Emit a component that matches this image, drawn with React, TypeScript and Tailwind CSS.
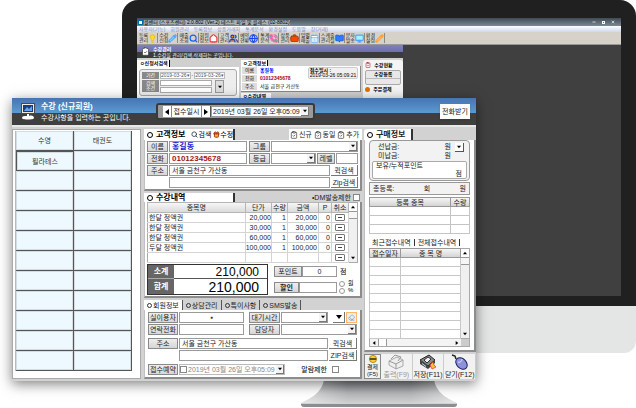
import React from "react";
import {
  BriefcaseBusiness,
  CalendarDays,
  ClipboardCheck,
  Eraser,
  Gift,
  Globe,
  Home,
  Lightbulb,
  Minus,
  MonitorDown,
  Pencil,
  PhoneCall,
  Search,
  Users,
  BookOpen,
  X,
} from "lucide-react";

const labelLook =
  "flex shrink-0 items-center justify-center whitespace-nowrap border border-[#8a8a8a] bg-gradient-to-b from-[#eeeeee] to-[#d6d6d6] text-[7px] leading-none text-[#222]";
const fieldLook =
  "min-w-0 border border-[#9a9a9a] bg-white px-[2px] leading-[9px] outline-none";

function Label({ id, children, className = "" }: { id: string; children: React.ReactNode; className?: string }) {
  return (
    <label htmlFor={id} className={`${labelLook} ${className}`}>
      {children}
    </label>
  );
}

function Field({ id, value = "", className = "", name, text = "text-[7px] text-[#222]" }: { id: string; value?: string; className?: string; name?: string; text?: string }) {
  return <input id={id} aria-label={name} defaultValue={value} className={`${fieldLook} ${text} ${className}`} />;
}

function Arrow({ dir = "down", className = "size-[4px]" }: { dir?: "down" | "up" | "left" | "right"; className?: string }) {
  const d = { down: "M0 1h6L3 5z", up: "M0 5h6L3 1z", left: "M5 0v6L1 3z", right: "M1 0v6l4-3z" }[dir];
  return (
    <svg viewBox="0 0 6 6" className={`shrink-0 fill-black ${className}`} aria-hidden="true">
      <path d={d} />
    </svg>
  );
}

function Select({ id, value = "", className = "", text = "text-[#222]", name }: { id: string; value?: string; className?: string; text?: string; name?: string }) {
  return (
    <span className={`flex min-w-0 items-stretch border border-[#9a9a9a] bg-white ${className}`}>
      <select id={id} aria-label={name} className={`min-w-0 flex-1 appearance-none bg-white pl-px text-[7px] leading-none outline-none ${text}`}>
        <option>{value}</option>
      </select>
      <span className="flex w-[8px] shrink-0 items-center justify-center border-r border-b border-[#777] bg-[#f4f4f4]">
        <Arrow />
      </span>
    </span>
  );
}

function Tick({ id, name }: { id: string; name?: string }) {
  return <input id={id} aria-label={name} type="checkbox" className="size-[7px] shrink-0 appearance-none border border-[#888] bg-white" />;
}

function SmallButton({ children, className = "" }: { children: React.ReactNode; className?: string }) {
  return (
    <button className={`flex shrink-0 items-center justify-center whitespace-nowrap border-r border-b border-[#777] bg-white text-[7px] leading-none text-[#222] ${className}`}>
      {children}
    </button>
  );
}

function Ring() {
  return <span className="size-[6px] shrink-0 rounded-full border border-black bg-white" />;
}

const panel = "border-r-2 border-b-2 border-l border-[#8c8c8c] border-l-[#c0c0c0] bg-white";

/* ---------- background program on the monitor ---------- */

const tools = [
  { a: "등록", b: "관리", icon: <Lightbulb className="size-[9px] fill-yellow-300 text-yellow-500" /> },
  { a: "수강", b: "신청", icon: <Pencil className="size-[9px] fill-sky-300 text-blue-500" /> },
  { a: "매출", b: "조회", icon: <Search className="size-[9px] stroke-[3] text-blue-600" /> },
  { a: "회원", b: "정보", icon: <Home className="size-[9px] fill-white stroke-[3] text-red-500" /> },
  { a: "고객", b: "관리", icon: <Users className="size-[9px] fill-orange-400 stroke-[3] text-blue-800" /> },
  { a: "예약", b: "현황", icon: <Globe className="size-[9px] fill-sky-200 stroke-[3] text-blue-700" /> },
  { a: "통계", b: "분석", icon: <PhoneCall className="size-[9px] fill-green-400 stroke-[3] text-pink-400" /> },
  { a: "상품", b: "관리", icon: <BriefcaseBusiness className="size-[9px] fill-orange-600 text-orange-800" /> },
  { a: "일별", b: "매출", icon: <CalendarDays className="size-[9px] fill-white text-blue-400" /> },
  { a: "스케줄", b: "관리실", icon: <BookOpen className="size-[9px] fill-blue-500 text-blue-700" /> },
  { a: "문자", b: "발송", icon: <MonitorDown className="size-[9px] fill-cyan-200 stroke-[3] text-blue-400" /> },
  { a: "환경", b: "설정", icon: <Pencil className="size-[9px] fill-orange-300 text-orange-400" /> },
];

function BackProgram() {
  return (
    <div className="text-[5px] leading-none">
      <div className="flex h-[8px] items-center gap-px bg-gradient-to-b from-[#3f4b55] to-[#7d8a94] pl-px text-black">
        <span className="size-[5px] shrink-0 border border-sky-700 bg-white" />
        <span className="whitespace-nowrap bg-[#a8b0b6]">콜센터 (스포츠센터) 2.0.802 (Ver.2) 테스트 파일 및 클래스 (02-8802)</span>
        <span className="ml-auto flex items-center gap-[6px] pr-[6px] text-white">
          <Minus className="size-[4px] stroke-[4]" />
          <span className="size-[3px] border border-white" />
          <X className="size-[4px] stroke-[4]" />
        </span>
      </div>
      <div className="flex h-[6px] items-center gap-[5px] bg-gradient-to-b from-white to-[#cfd8ee] pl-[2px] whitespace-nowrap text-[#8890ac]">
        <span>사용자(기능)</span><span>회원관리</span><span>등록정보</span><span>상품거래처</span><span>통계분석</span><span>환경설정</span><span>도움말</span><span>창(거래)</span>
      </div>
      <div className="flex h-[13px] items-stretch gap-px border-b border-[#999] bg-[#d6d2ca] py-px pl-[2px]">
        {tools.map((t) => (
          <button key={t.a} className="flex items-center border-r border-[#8d8a84] leading-[5px] whitespace-nowrap text-[#222]">
            <span>{t.a}<br />{t.b}</span>
            {t.icon}
          </button>
        ))}
      </div>
      <div className="mr-[45%] bg-[#d0d0d0]">
        <div className="flex h-[13px] items-center gap-[3px] bg-[linear-gradient(#8080bc_0,#6f6fae_7px,#3c3c3c_7px)] pl-[4px]">
          <ClipboardCheck className="size-[9px] shrink-0 fill-white text-[#444]" />
          <div className="leading-[6px] text-white">
            <b className="block">수강관리</b>
            <span className="block whitespace-nowrap">1.수강을 관리/검색,삭제하는 곳입니다.</span>
          </div>
        </div>
        <div className="flex gap-[2px] pt-[2px] text-[5px]">
          <div className="w-[102px] shrink-0">
            <div className="flex h-[7px] w-[33px] items-center border-r border-black bg-white pl-[3px] font-bold whitespace-nowrap">
              ㅇ신청서검색
            </div>
            <div className="bg-white p-[2px]">
              <div className="flex gap-px rounded-[3px] border border-[#aaa] bg-[#eee] p-[2px]">
                <div className="flex w-[17px] flex-col gap-px text-center text-white">
                  <span className="bg-[#888] py-px">기간</span>
                  <span className="bg-[#888] py-px">검색<br />조건</span>
                </div>
                <div className="flex flex-1 flex-col gap-px">
                  <div className="flex items-center gap-px whitespace-nowrap text-[#555]">
                    <span className="border border-[#bbb] bg-white">2019-03-26▾</span>-<span className="border border-[#bbb] bg-white">2019-03-26▾</span>
                  </div>
                  <div className="flex gap-[3px]">
                    <div className="flex flex-1 flex-col gap-px">
                      <span className="h-[6px] border border-[#aaa] bg-white" />
                      <span className="h-[6px] border border-[#aaa] bg-white" />
                    </div>
                    <span className="flex w-[9px] items-center justify-center border border-[#999] bg-[#ddd]"><Arrow /></span>
                    <span className="w-[7px]" />
                  </div>
                </div>
              </div>
              <div className="mt-[3px] flex items-center gap-[3px] pb-[6px]">
                <span>▾검색결과 :</span>
                <span className="w-[22px] border border-[#aaa] text-right">1 개</span>
              </div>
            </div>
          </div>
          <div className="min-w-0 flex-1">
            <div className="flex h-[6px] w-[27px] items-center border-r border-black bg-white pl-[2px] font-bold whitespace-nowrap">ㅇ고객정보</div>
            <div className="flex h-[26px] justify-between border-r border-b border-[#888] bg-white p-px">
              <div className="grid grid-cols-[15px_auto] content-start gap-x-[3px] gap-y-px whitespace-nowrap">
                <span className="bg-[#ddd] py-px text-center">이름</span><b className="py-px text-[blue]">홍길동</b>
                <span className="bg-[#ddd] py-px text-center">전화</span><b className="py-px text-[#a00]">01012345678</b>
                <span className="bg-[#ddd] py-px text-center">주소</span><span className="py-px">서울 금천구 가산동</span>
              </div>
              <div className="mr-px h-[12px] rounded-[2px] border border-[#ccc] bg-[#f0f0f0] px-px whitespace-nowrap">
                <b>접수일시 :</b><br />2019-03-26 05:09:21
              </div>
            </div>
            <div className="mt-px h-[8px] w-[30px] bg-white pt-px pl-[2px] font-bold whitespace-nowrap">ㅇ수강내역</div>
          </div>
          <div className="w-[40px] shrink-0 rounded-t-[3px] bg-[#f4f4f4] p-[2px] text-center font-bold">
            <div className="flex items-center gap-[3px]"><ClipboardCheck className="size-[6px] text-red-700" />수강현황</div>
            <div className="my-[2px] h-[15px] rounded-[2px] border border-[#aaa] bg-[#e8e8e8] pt-px">수강등록<hr className="mt-px border-[#bbb]" /></div>
            <div className="flex items-center gap-[3px]"><span className="size-[5px] rounded-full bg-amber-600" />주문결제</div>
          </div>
        </div>
      </div>
    </div>
  );
}

/* ---------- enrolment window ---------- */

function TitleBar() {
  return (
    <header className="flex h-[27px] items-center bg-[linear-gradient(#4774b2_0,#5b9bd0_15px,#3f3f3f_15px)] text-white">
      <div className="flex w-[144px] shrink-0 items-center gap-[6px] pl-[9px]">
        <svg viewBox="0 0 14 17" className="h-[17px] w-[14px] shrink-0" aria-hidden="true">
          <rect x="0.5" y="0.5" width="13" height="10" fill="#f4ead8" stroke="#4a4a4a" />
          <rect x="2" y="2" width="10" height="7" fill="#173b8c" />
          <path d="M3 8l3-4 2 2 3-3v5z" fill="#67a4ea" />
          <path d="M6 11h2v2c3-1 5 0 5 2s-12 2-12 0 2-2 5-2z" fill="white" />
        </svg>
        <div>
          <h1 className="text-[8px] leading-[12px] font-bold whitespace-nowrap">수강 (신규회원)</h1>
          <p className="text-[7px] leading-[10px] whitespace-nowrap">수강사항을 입력하는 곳입니다.</p>
        </div>
      </div>
      <div className="flex h-[17px] w-[159px] shrink-0 items-center rounded-[3px] border-2 border-[#3a3a3a] bg-[#9a9a9a] pr-[3px] pl-[5px]">
        <div className="flex h-[11px] w-[48px] shrink-0 items-stretch border-r border-[#555] bg-white text-[7px] leading-none text-[#222]">
          <button aria-label="이전" className="flex w-[9px] items-center justify-center border-r border-[#888]"><Arrow dir="left" className="size-[6px]" /></button>
          <span className="flex flex-1 items-center justify-center whitespace-nowrap">접수일시</span>
          <button aria-label="다음" className="flex w-[9px] items-center justify-center border-l border-[#888]"><Arrow dir="right" className="size-[6px]" /></button>
        </div>
        <Select id="when" name="접수일시" value="2019년 03월 26일 오후05:09" className="h-[11px] flex-1" />
      </div>
      <button className="mr-[6px] ml-auto h-[15px] w-[30px] bg-white text-[7px] leading-none whitespace-nowrap text-[#111] shadow">전화받기</button>
    </header>
  );
}

function ClassGrid() {
  const cells = Array.from({ length: 24 }, (_, i) => ["수영", "태권도", "필라테스"][i] ?? "");
  return (
    <div className="w-[129px] shrink-0 border border-[#aaa] bg-white pt-px pr-[8px] pl-[2px]">
      <div className="grid grid-cols-2 border-l border-[#bbb]">
        {cells.map((c, i) => (
          <button key={i} aria-label={c || "빈 칸"} className={`h-[20px] border-r border-b border-[#555] bg-[#edf9ff] text-[7px] leading-none text-[#333] inset-shadow-[0_0_0_1px_#d3dde2] ${i === 2 ? "border-t border-l" : ""}`}>
            {c}
          </button>
        ))}
      </div>
    </div>
  );
}

function CustomerInfo() {
  return (
    <section>
      <div className="flex h-[11px] items-stretch justify-between text-[7px] leading-none">
        <div className="flex w-[91px] shrink-0 items-center gap-[2px] border-r-2 border-[#333] bg-white pl-[3px] whitespace-nowrap">
          <Ring />
          <h2 className="ml-px text-[8px] font-bold">고객정보</h2>
          <span className="mx-px h-[8px] w-px bg-[#999]" />
          <button className="flex items-center"><Search className="size-[7px] stroke-[3] text-[#345]" />검색</button>
          <button className="flex items-center"><Gift className="size-[7px] fill-amber-400 stroke-[3] text-[#9b3020]" />수정</button>
        </div>
        <div className="flex w-[73px] items-center justify-around bg-white pr-[2px] text-[#222]">
          {["신규", "동일", "추가"].map((t) => (
            <button key={t} className="flex items-center gap-px whitespace-nowrap"><ClipboardCheck className="size-[8px] text-[#333]" />{t}</button>
          ))}
        </div>
      </div>
      <div className={`${panel} flex flex-col gap-px px-[2px] pt-px pb-px`}>
        <div className="flex h-[11px] gap-px">
          <Label id="name" className="w-[21px]">이름</Label>
          <Field id="name" value="홍길동" text="text-[8px] font-bold text-[#2020d0]" className="w-[78px]" />
          <Label id="group" className="ml-px w-[21px]">그룹</Label>
          <Select id="group" className="flex-1" />
        </div>
        <div className="flex h-[11px] gap-px">
          <Label id="phone" className="w-[21px]">전화</Label>
          <Field id="phone" value="01012345678" text="text-[8px] font-bold text-[#a01818]" className="w-[78px]" />
          <Label id="grade" className="ml-px w-[21px]">등급</Label>
          <Select id="grade" className="flex-1" />
          <Label id="level" className="w-[18px]">레벨</Label>
          <Field id="level" className="w-[22px]" />
        </div>
        <div className="flex h-[11px] gap-px">
          <Label id="addr" className="w-[21px]">주소</Label>
          <Field id="addr" value="서울 금천구 가산동" className="flex-1" />
          <SmallButton className="w-[27px]">퀵검색</SmallButton>
        </div>
        <div className="flex h-[11px] gap-px pl-[22px]">
          <Field id="addr2" name="상세주소" className="flex-1" />
          <SmallButton className="w-[27px]">Zip검색</SmallButton>
        </div>
      </div>
    </section>
  );
}

const lessons = [
  ["한달 정액권", "20,000"],
  ["한달 정액권", "30,000"],
  ["한달 정액권", "60,000"],
  ["두달 정액권", "100,000"],
  ["", ""],
];

function ScrollBar() {
  return (
    <div className="flex w-[9px] shrink-0 flex-col items-center justify-between border border-l-0 border-[#aaa] bg-[#f0f0f0]">
      <div className="flex w-full flex-col items-center bg-white">
        <span className="flex h-[8px] items-center"><Arrow dir="up" /></span>
        <span className="h-[8px] w-full border-t border-b border-[#999] bg-[#f6f6f6]" />
      </div>
      <span className="flex h-[8px] items-center"><Arrow /></span>
    </div>
  );
}

function Lessons() {
  return (
    <section className="mt-[2px]">
      <div className="flex h-[9px] items-center justify-between text-[7px] leading-none">
        <div className="flex h-full w-[91px] items-center gap-[3px] border-r-2 border-[#333] bg-white pl-[3px]">
          <Ring />
          <h2 className="text-[8px] font-bold">수강내역</h2>
        </div>
        <span className="flex items-center gap-[2px] pr-[2px] text-[#222]">
          <label htmlFor="dm" className="whitespace-nowrap">•DM발송제한</label>
          <Tick id="dm" />
        </span>
      </div>
      <div className={`${panel} px-[2px] pb-px`}>
        <div className="flex items-stretch">
          <table className="min-w-0 flex-1 table-fixed border-collapse text-[7px] leading-none text-[#222]">
            <colgroup>
              <col /><col className="w-[25px]" /><col className="w-[16px]" /><col className="w-[31px]" /><col className="w-[13px]" /><col className="w-[17px]" />
            </colgroup>
            <thead>
              <tr className="h-[10px] bg-gradient-to-b from-[#f6f6f6] to-[#d8d8d8]">
                {["종목명", "단가", "수량", "금액", "P", "취소"].map((h) => (
                  <th key={h} className="border border-[#b5b5b5] p-0 font-normal whitespace-nowrap">{h}</th>
                ))}
              </tr>
            </thead>
            <tbody>
              {lessons.map(([n, p], i) => (
                <tr key={i} className="h-[10px] text-right">
                  <td className="border border-[#d4d4d4] border-l-[#aaa] p-0 pl-px text-left">{n}</td>
                  <td className="border border-[#d4d4d4] p-0">{p}</td>
                  <td className="border border-[#d4d4d4] p-0 pr-px">{p && "1"}</td>
                  <td className="border border-[#d4d4d4] p-0 pr-px">{p}</td>
                  <td className="border border-[#d4d4d4] p-0 pr-px">{p && "0"}</td>
                  <td className="border border-[#d4d4d4] p-0">
                    <button aria-label="취소" className="mx-auto flex h-[7px] w-[10px] items-center justify-center rounded-[1px] border border-[#777] bg-white"><span className="h-px w-[4px] bg-[#444]" /></button>
                  </td>
                </tr>
              ))}
            </tbody>
          </table>
          <ScrollBar />
        </div>
        <div className="mt-px flex items-stretch">
          <dl className="grid w-[121px] shrink-0 grid-cols-[26px_1fr] grid-rows-[14px_15px] border border-[#333] leading-none text-black">
            <dt className="flex items-center justify-center border-b border-[#aaa] bg-[#666] text-[8px] font-bold text-white">소계</dt>
            <dd className="flex items-center justify-end border-b border-[#555] pr-[8px] text-[12px]">210,000</dd>
            <dt className="flex items-center justify-center bg-[#666] text-[8px] font-bold text-white">합계</dt>
            <dd className="flex items-center justify-end pr-[8px] text-[14px]">210,000</dd>
          </dl>
          <div className="ml-[6px] flex min-w-0 flex-1 flex-col justify-around">
            <div className="flex h-[11px]">
              <Label id="point" className="w-[28px]">포인트</Label>
              <Field id="point" value="0" className="w-[35px] text-center" />
              <span className="flex items-center pl-[3px] text-[7px] leading-none">점</span>
            </div>
            <div className="flex h-[11px] items-center">
              <Label id="sale" className="h-full w-[25px] font-bold">할인</Label>
              <Field id="sale" className="h-full w-[38px]" />
              <span className="flex flex-col pl-[2px] text-[6px] leading-[7px]">
                <label className="flex items-center gap-[3px]"><input type="radio" name="unit" className="size-[6px] appearance-none rounded-full border border-[#999] bg-white" />원</label>
                <label className="flex items-center gap-[3px]"><input type="radio" name="unit" className="size-[6px] appearance-none rounded-full border border-[#999] bg-white" />%</label>
              </span>
            </div>
          </div>
        </div>
      </div>
    </section>
  );
}

function MemberInfo() {
  return (
    <section className="mt-[2px]">
      <div className="flex h-[10px] items-stretch text-[7px] leading-none text-[#222]">
        {["회원정보", "상담관리", "특이사항", "SMS발송"].map((t, i) => (
          <button key={t} className={`flex items-center gap-px border-r border-[#555] px-[3px] whitespace-nowrap ${i === 0 ? "bg-white" : ""}`}>
            <span className="size-[5px] rounded-full border border-[#333]" />{t}
          </button>
        ))}
      </div>
      <div className={`${panel} px-[3px] pt-[2px] pb-[2px]`}>
        <div className="flex h-[11px] gap-px">
          <Label id="user" className="w-[30px]">실이용자</Label>
          <Field id="user" value="●" text="text-[5px] text-[#333]" className="w-[65px] text-center" />
          <Label id="wait" className="ml-[4px] w-[31px]">대기시간</Label>
          <Select id="wait" className="flex-1" />
          <SmallButton className="ml-[4px] w-[12px]"><Arrow className="size-[6px]" /></SmallButton>
          <button aria-label="지우기" className="flex w-[11px] items-center justify-center border border-orange-300 bg-[#eee]"><Eraser className="size-[7px] text-[#789]" /></button>
        </div>
        <div className="mt-px flex h-[11px] gap-px">
          <Label id="contact" className="w-[30px]">연락전화</Label>
          <Field id="contact" className="w-[65px]" />
          <Label id="staff" className="ml-[4px] w-[31px]">담당자</Label>
          <Select id="staff" className="flex-1" />
        </div>
        <div className="mt-[3px] flex h-[11px] gap-px">
          <Label id="home" className="w-[30px]">주소</Label>
          <Field id="home" value="서울 금천구 가산동" className="flex-1" />
          <SmallButton className="w-[28px]">퀵검색</SmallButton>
        </div>
        <div className="mt-px flex h-[11px] gap-px pl-[31px]">
          <Field id="home2" name="상세주소" className="flex-1" />
          <SmallButton className="w-[28px]">ZIP검색</SmallButton>
        </div>
        <div className="mt-[3px] flex h-[11px] items-stretch gap-px">
          <Label id="book" className="w-[30px]">접수예약</Label>
          <span className="flex w-[106px] items-center border border-[#bbb]">
            <Tick id="book" />
            <Select id="bookwhen" name="예약일시" value="2019년 03월 26일 오후05:09" text="text-[#888]" className="h-full flex-1 border-0" />
          </span>
          <span className="ml-auto flex items-center gap-[5px] pr-[18px] text-[7px] leading-none">
            <label htmlFor="alarm" className="whitespace-nowrap">알람제한</label>
            <Tick id="alarm" />
          </span>
        </div>
      </div>
    </section>
  );
}

const actions = [
  {
    t: "출력(F9)", on: false,
    icon: <><path d="M2 7l8-4 6 3v6l-7 3-7-4z" fill="#eee" stroke="#aaa" /><path d="M4 5l4-4 6 2-3 4M2 7l7 3 7-4M9 10v5" fill="none" stroke="#999" /></>,
  },
  {
    t: "저장(F11)", on: true,
    icon: <><path d="M1 6l9-5 6 5-7 6z" fill="#888" stroke="#222" /><path d="M5 6l4-3 3 2-4 4z" fill="#f0f0f0" stroke="#333" /><path d="M1 6v4l8 5 7-6V6l-7 6z" fill="#444" /><path d="M3 9l4 3v1l-4-3z" fill="#ddd" /><path d="M11 11l3-3 1 3 2 2-4 2z" fill="#fb3" stroke="#d33" strokeWidth="0.7" /></>,
  },
  {
    t: "닫기(F12)", on: true,
    icon: <><path d="M1 1l3 1 1 3" fill="none" stroke="#222" strokeWidth="1.5" /><ellipse cx="10.5" cy="9.5" rx="6.5" ry="4.8" transform="rotate(45 10.5 9.5)" fill="#8c92dc" stroke="#202060" /><path d="M7 8c2 1 4-1 4-3" stroke="#eef" fill="none" /></>,
  },
];

function Purchases() {
  return (
    <aside className="ml-px flex w-[112px] shrink-0 flex-col text-[7px] leading-none text-[#222]">
      <div className="flex h-[11px] w-[49px] items-center gap-[3px] rounded-tl-[3px] border-r-2 border-[#333] bg-white pl-[3px]">
        <Ring />
        <h2 className="text-[8px] font-bold whitespace-nowrap">구매정보</h2>
      </div>
      <div className={`${panel} flex flex-1 flex-col px-[4px] pb-px`}>
        <div className="rounded-[4px] border border-[#999] bg-[#f2f2f2] px-[2px] py-px">
          <div className="flex h-[18px] items-start pr-[3px] pl-[6px] leading-[9px]">
            <span>선납금:<br />미납금:</span>
            <span className="mr-[4px] ml-auto">원<br />원</span>
            <button aria-label="선납금 보기" className="mt-px flex size-[9px] items-center justify-center border-r border-b border-[#555] bg-white"><Arrow /></button>
          </div>
          <div className="mt-px flex flex-col rounded-[2px] border border-[#aaa] bg-white px-[3px] leading-[8px]">
            <span>보유/누적포인트</span>
            <span className="pr-px text-right">점</span>
          </div>
        </div>
        <div className="mt-px flex h-[13px] shrink-0 items-center justify-between border border-[#999] bg-[#f2f2f2] px-[3px]">
          <span>총등록:</span><span>회</span><span>원</span>
        </div>
        <table className="mt-[2px] w-full table-fixed border-collapse">
          <colgroup><col /><col className="w-[19px]" /></colgroup>
          <thead>
            <tr className="h-[9px] bg-gradient-to-b from-[#f6f6f6] to-[#d0d0d0]">
              <th className="border border-[#999] p-0 font-normal">등록 종목</th>
              <th className="border border-[#999] p-0 font-normal">수량</th>
            </tr>
          </thead>
          <tbody>
            {[0, 1, 2].map((r) => (
              <tr key={r} className="h-[9px]"><td className="border border-[#c4c4c4] p-0" /><td className="border border-[#c4c4c4] p-0" /></tr>
            ))}
          </tbody>
        </table>
        <div className="mt-[3px] flex h-[11px] shrink-0 items-center pl-[3px] whitespace-nowrap">
          <button className="border-r border-[#333] pr-[3px]">최근접수내역</button>
          <button className="border-r border-[#333] px-[3px]">전체접수내역</button>
        </div>
        <div className="flex items-stretch">
          <table className="min-w-0 flex-1 table-fixed border-collapse">
            <colgroup><col className="w-[31px]" /><col /></colgroup>
            <thead>
              <tr className="h-[9px] bg-gradient-to-b from-[#f6f6f6] to-[#d0d0d0]">
                <th className="border border-[#999] p-0 font-normal whitespace-nowrap">접수일자</th>
                <th className="border border-[#999] p-0 font-normal">종 목 명</th>
              </tr>
            </thead>
            <tbody>
              {Array.from({ length: 9 }, (_, r) => (
                <tr key={r} className="h-[9px]"><td className="border border-[#c8c8c8] p-0" /><td className="border border-[#c8c8c8] p-0" /></tr>
              ))}
            </tbody>
          </table>
          <ScrollBar />
        </div>
        <div className="flex h-[8px] shrink-0 items-center border border-t-0 border-[#aaa] bg-[#f4f4f4]">
          <span className="flex w-[8px] justify-center"><Arrow dir="left" /></span>
          <span className="h-full w-[9px] border-r border-l border-[#999] bg-white" />
          <span className="ml-auto flex w-[9px] justify-center"><Arrow dir="right" /></span>
          <span className="h-full w-[8px] bg-[#ccc]" />
        </div>
      </div>
      <div className="mt-[2px] flex h-[25px] items-stretch bg-[#f2f2f2]">
        <button className="flex w-[17px] flex-col items-center justify-between border border-[#888] text-[6px] leading-[7px]">
          <svg viewBox="0 0 10 10" className="size-[8px]" aria-hidden="true"><circle cx="5" cy="5" r="4.5" fill="#fc3" stroke="#a70" /><path d="M1 4h8v2H1z" fill="#333" /></svg>
          <span>결제<br />(F5)</span>
        </button>
        {actions.map((a) => (
          <button key={a.t} className={`flex min-w-0 flex-1 flex-col items-center justify-between border-r border-[#ccc] whitespace-nowrap ${a.on ? "" : "text-[#999]"}`}>
            <svg viewBox="0 0 18 16" className="h-[16px] w-[18px] shrink-0" aria-hidden="true">{a.icon}</svg>
            <span className="leading-[8px]">{a.t}</span>
          </button>
        ))}
      </div>
    </aside>
  );
}

export default function App() {
  return (
    <main className="relative min-h-screen overflow-hidden bg-white [font-family:'Liberation_Sans','Noto_Sans_CJK_KR',sans-serif]">
      <div className="ml-[122px] flex flex-col items-center">
        <div className="w-full overflow-hidden rounded-t-[16px] rounded-b-[12px] bg-[#e4e6e5]">
          <div className="bg-[#202020] px-[15px] pt-[18px] pb-[10px]">
            <div className="h-[278px] overflow-hidden bg-[#404040]">
              <BackProgram />
            </div>
          </div>
          <div className="h-[47px]" />
        </div>
        <svg viewBox="0 0 156 54" className="h-[54px] w-[156px]" aria-hidden="true">
          <defs>
            <linearGradient id="neck" x1="0" y1="0" x2="0" y2="1">
              <stop offset="0.2" stopColor="#777a7e" />
              <stop offset="0.6" stopColor="#b4b6b8" />
              <stop offset="1" stopColor="#d8dadb" />
            </linearGradient>
            <linearGradient id="sheen" x1="0" y1="0" x2="1" y2="0">
              <stop offset="0" stopColor="white" stopOpacity="0.5" />
              <stop offset="0.3" stopColor="white" stopOpacity="0" />
              <stop offset="0.7" stopColor="white" stopOpacity="0" />
              <stop offset="1" stopColor="white" stopOpacity="0.5" />
            </linearGradient>
          </defs>
          <path d="M24 20h108c1 16 8 23 24 30v2q0 2-3 2H3q-3 0-3-2v-2c16-7 23-14 24-30z" fill="url(#neck)" />
          <path d="M24 20h108c1 16 8 23 24 30H0c16-7 23-14 24-30z" fill="url(#sheen)" />
          <path d="M0 51h156v1q-1 2-3 2H3q-2 0-3-2z" fill="#8b8d8f" />
        </svg>
      </div>

      <div className="absolute top-[98px] right-[160px] left-[12px] bg-[#d2d2d2] shadow-[0_3px_12px_rgba(0,0,0,0.5)]">
        <TitleBar />
        <div className="flex items-stretch gap-px border-t-2 border-[#e8e8e8] pt-[2px] pb-[2px]">
          <ClassGrid />
          <div className="ml-[2px] min-w-0 flex-1">
            <CustomerInfo />
            <Lessons />
            <MemberInfo />
          </div>
          <Purchases />
        </div>
      </div>
    </main>
  );
}
